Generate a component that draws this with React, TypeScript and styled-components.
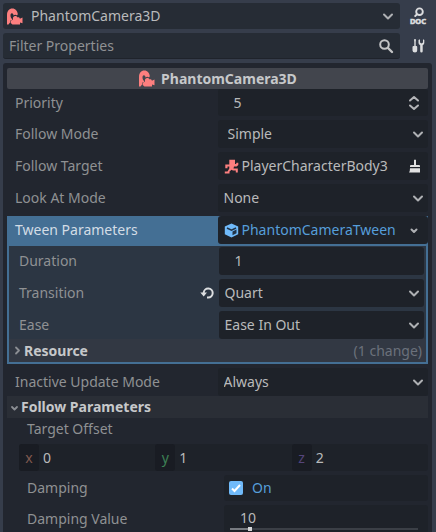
import React, { useState } from "react";
import styled, { createGlobalStyle, css } from "styled-components";

const color = {
  base: "#363d4b",
  panel: "#22262f",
  bar: "#262c35",
  field: "#1e2229",
  title: "#42454d",
  group: "#2a2e36",
  sub: "#2c3643",
  subGroup: "#323843",
  accent: "#446f94",
  link: "#569eda",
  check: "#70bafa",
  label: "#8f9193",
  text: "#b9babb",
  strong: "#c6c8ca",
  node: "#fc7f7f",
};

const Global = createGlobalStyle`
  * { box-sizing: border-box; }
  body { margin: 0; background: ${color.base}; overflow: hidden; }
  body, button, input, select {
    font-family: "Noto Sans", sans-serif;
    font-size: 14px;
    line-height: 20px;
  }
  button, input, select {
    margin: 0; padding: 0; border: 0; border-radius: 0;
    background: none; color: inherit; min-width: 0;
  }
  svg { display: block; flex: none; }
`;

const Dock = styled.main`
  display: flex;
  flex-direction: column;
  height: 100vh;
  padding: 3px 4px 0 3px;
  color: ${color.text};
`;

const Toolbar = styled.div`
  display: grid;
  grid-template-columns: 1fr 32px;
  row-gap: 4px;
  margin-bottom: 4px;
`;

const NodeButton = styled.button`
  display: flex;
  align-items: center;
  gap: 8px;
  height: 26px;
  padding: 0 4px 0 3px;
  border-radius: 3px;
  background: ${color.bar};
  text-align: left;
`;

const Grow = styled.span`
  flex: 1;
  min-width: 0;
  white-space: nowrap;
  overflow: hidden;
`;

const FilterBox = styled.label`
  display: flex;
  align-items: center;
  height: 26px;
  padding: 0 6px;
  border-radius: 3px;
  border-bottom: 1px solid #1f232b;
  background: ${color.bar};
`;

const FilterInput = styled.input`
  flex: 1;
  outline: none;
  &::placeholder { color: ${color.label}; opacity: 1; }
`;

const ToolButton = styled.button`
  display: flex;
  align-items: center;
  justify-content: center;
  padding-left: 4px;
  color: #dcdddf;
`;

const Panel = styled.section`
  display: flex;
  flex-direction: column;
  flex: 1;
  padding: 5px 4px 0;
  border-radius: 3px 3px 0 0;
  background: ${color.panel};
`;

const Title = styled.h1`
  display: flex;
  align-items: center;
  justify-content: center;
  gap: 6px;
  height: 21px;
  margin: 0;
  border-radius: 2px;
  background: ${color.title};
  color: ${color.strong};
  font-size: 14px;
  font-weight: 700;
`;

const Rows = styled.div`
  display: grid;
  gap: 4px;
`;

const Row = styled.div<{ $height?: number; $wide?: boolean; $selected?: boolean }>`
  display: grid;
  grid-template-columns: ${(p) => (p.$wide ? "1fr 204px" : "1fr 1fr")};
  height: ${(p) => p.$height ?? 28}px;
  ${(p) => p.$selected && css`background: ${color.accent}; --label: #d3dde6;`}
`;

const Label = styled.label<{ $indent?: number }>`
  display: flex;
  align-items: center;
  justify-content: space-between;
  padding-left: ${(p) => p.$indent ?? 8}px;
  padding-right: 4px;
  color: var(--label, ${color.label});
  white-space: nowrap;
`;

const Field = styled.div<{ $pad?: number }>`
  display: flex;
  align-items: center;
  min-width: 0;
  padding: 0 6px 0 ${(p) => p.$pad ?? 6}px;
  border-radius: 3px;
  background: ${color.field};
`;

const NumberInput = styled.input`
  flex: 1;
  width: 100%;
  outline: none;
`;

const SelectBox = styled.div`
  display: grid;
  align-items: center;
  border-radius: 3px;
  background: ${color.field};
  > * { grid-area: 1 / 1; }
  > svg { justify-self: end; margin-right: 2px; pointer-events: none; }
`;

const Select = styled.select<{ $pad?: number }>`
  appearance: none;
  width: 100%;
  height: 100%;
  padding-left: ${(p) => p.$pad ?? 6}px;
  outline: none;
`;

const ValueButton = styled.button<{ $link?: boolean }>`
  display: flex;
  align-items: center;
  flex: 1;
  gap: 3px;
  color: ${(p) => (p.$link ? color.link : "inherit")};
  text-align: left;
`;

const ClearButton = styled.button`
  flex: none;
`;

const SubInspector = styled.div`
  display: flex;
  flex-direction: column;
  margin-bottom: 4px;
  border: 2px solid ${color.accent};
  background: ${color.sub};
`;

const SubRows = styled(Rows)`
  padding: 1px 2px 0;
`;

const SubRow = styled(Row)`
  grid-template-columns: 1fr calc(50% - 1px);
`;

const GroupHeader = styled.button<{ $nested?: boolean }>`
  display: flex;
  align-items: center;
  width: 100%;
  height: ${(p) => (p.$nested ? 23 : 22)}px;
  padding: 0 4px 0 ${(p) => (p.$nested ? 1 : 0)}px;
  background: ${(p) => (p.$nested ? color.subGroup : color.group)};
  color: ${color.strong};
  font-weight: 700;
  text-align: left;
`;

const Changes = styled.span`
  color: #6b717b;
  font-weight: 400;
`;

const GroupLabel = styled.div`
  height: 26px;
  padding: 1px 0 0 20px;
  color: ${color.label};
`;

const Vector = styled.div`
  display: grid;
  grid-template-columns: repeat(3, 1fr);
  height: 27px;
  margin: 0 0 4px 12px;
  border-radius: 3px;
  background: ${color.field};
`;

const Axis = styled.label<{ $tone: string }>`
  display: flex;
  align-items: stretch;
  gap: 4px;
  min-width: 0;
  > span {
    display: grid;
    place-items: center;
    width: 20px;
    border-radius: 3px;
    background: #191c23;
    color: ${(p) => p.$tone};
  }
`;

const CheckField = styled.label`
  display: flex;
  align-items: center;
  gap: 9px;
  padding-left: 5px;
  border-radius: 3px;
  background: ${color.field};
  color: ${color.link};
`;

const Checkbox = styled.span`
  display: grid;
  width: 14px;
  height: 14px;
  > * { grid-area: 1 / 1; }
  > svg { pointer-events: none; }
  input {
    appearance: none;
    border-radius: 2px;
    background: #3a3f49;
  }
  input:checked { background: ${color.check}; }
  input:not(:checked) + svg { visibility: hidden; }
`;

const SliderField = styled.div`
  display: flex;
  flex-direction: column;
  padding: 3px 10px 0 6px;
  border-radius: 3px;
  background: ${color.field};
  input[type="text"] { height: 19px; padding-left: 10px; outline: none; }
`;

const Slider = styled.input`
  appearance: none;
  width: 100%;
  height: 4px;
  background: linear-gradient(
      to right,
      #777b81 var(--fill),
      #3b3f46 var(--fill)
    )
    center / 100% 2px no-repeat;
  &::-webkit-slider-thumb {
    appearance: none;
    width: 4px;
    height: 4px;
    background: #d4d5d7;
  }
`;

const PhantomIcon = () => (
  <svg width="17" height="17" viewBox="0 0 17 17">
    <path
      fill={color.node}
      d="M1 16.500V7C1 3 3.200 .5 6.300 .5C9.500 .5 11.500 3 11.800 6.300L11 7.500C10 6.500 8.500 6.600 7.600 7.600C7.300 6 6.800 5.300 5.900 5.300C4.800 5.300 4.500 6.400 4.500 7.500C4.500 9 5.100 10 6 11V12.500H4.200V14.200L2.500 16.500Z"
    />
    <path
      fill={color.node}
      d="M5.500 12.700L7 11.200C6.500 9.500 7.600 7.900 9.300 7.900C10.500 7.900 11.300 8.500 11.700 9.500C12.800 9 13.800 9.700 13.900 10.800L16.500 9.600V15.200L14 14.400V16.500H6.500L4.700 15V12.700Z"
    />
  </svg>
);

const Chevron = ({ small = false }: { small?: boolean }) => (
  <svg width="16" height="16" viewBox="0 0 16 16" fill="none" stroke="#aeb0b3" strokeWidth="2" strokeLinecap="round" strokeLinejoin="round">
    <path d={small ? "M5.500 7.500L8 10L10.500 7.500" : "M4 6.500L8 10.500L12 6.500"} />
  </svg>
);

const GroupArrow = ({ open }: { open: boolean }) => (
  <svg width="14" height="15" viewBox="0 0 14 15" fill="none" stroke="#8b8e93" strokeWidth="1.800" strokeLinecap="round" strokeLinejoin="round">
    <path d={open ? "M5 7L7.500 9.500L10 7" : "M6 4.500L9 7.500L6 10.500"} />
  </svg>
);

const UpDownIcon = () => (
  <svg width="16" height="16" viewBox="0 0 16 16" fill="none" stroke="#b4b5b8" strokeWidth="2" strokeLinecap="round" strokeLinejoin="round">
    <path d="M4 5.500L8 2L12 5.500M4 10.500L8 14L12 10.500" />
  </svg>
);

const SearchIcon = () => (
  <svg width="16" height="16" viewBox="0 0 16 16" fill="none" stroke="#c3c4c6" strokeWidth="2" strokeLinecap="round">
    <circle cx="6.500" cy="6.500" r="4.300" />
    <path d="M10 10L14 14" strokeWidth="2.400" />
  </svg>
);

const DocIcon = () => (
  <svg width="18" height="18" viewBox="0 0 18 18" fill="none" stroke="currentColor" strokeWidth="1.900" strokeLinecap="round">
    <circle cx="10.500" cy="4.700" r="3.300" />
    <path d="M7.900 7.300L6.200 9" />
    <text x="9" y="17" textAnchor="middle" fill="currentColor" strokeWidth=".6" fontFamily="Noto Sans, sans-serif" fontWeight="700" fontSize="7.500">DOC</text>
  </svg>
);

const ToolsIcon = () => (
  <svg width="16" height="16" viewBox="0 0 16 16" fill="currentColor">
    <path d="M4 1.500L5 1L6 1.500L5.700 4V8H6.500Q7.200 8 7.200 9V12.500Q7.200 14.500 5 14.500Q2.500 14.500 2.500 12.500V9Q2.500 8 3.500 8H4.300V4Z" />
    <path d="M8.500 2L10 1.300V4.600L11.500 5.500L13 4.600V1.300L14.300 2V5Q14.300 6.500 12.700 7.300V13.300Q12.700 14.500 11.500 14.500Q10.200 14.500 10.200 13.300V7.300Q8.500 6.500 8.500 5Z" />
  </svg>
);

const CharacterIcon = () => (
  <svg width="15" height="15" viewBox="0 0 15 15" fill={color.node}>
    <path d="M5.300 .8H11V5H12L12.600 3.800H14.300V6L12.600 7.500H10L9.500 9.500H13.800V13.500H11.800V11.500H9L7.500 10.700L5.500 12.500V14.500H.8V12.500H3.500L5.300 9.500V7.500H3.500V9.200H1.300V5.500H5.300Z" />
  </svg>
);

const BroomIcon = () => (
  <svg width="14" height="16" viewBox="0 0 14 16" fill="#e0e0e0">
    <path d="M6 2Q7 .8 8 2V7H11Q12 7 12 8V9H2V8Q2 7 3 7H6ZM2 10.300H12V14.500H1Q2 13.500 2 10.300Z" />
  </svg>
);

const CubeIcon = () => (
  <svg width="15" height="15" viewBox="0 0 15 15">
    <path fill={color.check} d="M7.500 .5L14.200 3.500V11.300L7.500 14.500L.8 11.300V3.500Z" />
    <path fill="none" stroke="#223448" strokeWidth="1.500" d="M3 5L7.500 7.200L12 5" />
    <path fill="#223448" d="M8.500 8.400L12.500 6.500V10.300L8.500 12.200Z" />
  </svg>
);

const RevertIcon = () => (
  <svg width="16" height="16" viewBox="0 0 16 16">
    <path fill="none" stroke="#dcdee0" strokeWidth="2" d="M4.700 8.500V7.700A4.500 4.500 0 1 1 9.200 12.500H8" />
    <path fill="#dcdee0" d="M1.300 7.500H8L4.700 11.500Z" />
  </svg>
);

const CheckMark = () => (
  <svg width="14" height="14" viewBox="0 0 14 14" fill="none" stroke="#fff" strokeWidth="2">
    <path d="M3 7.500L5.500 10L11 4" />
  </svg>
);

type DropProps = { id: string; label: string; value: string; pad?: number };

const Drop = ({ id, label, value, pad }: DropProps) => (
  <SelectBox>
    <Select id={id} aria-label={label} $pad={pad}>
      <option>{value}</option>
    </Select>
    <Chevron />
  </SelectBox>
);

const axes = [
  { name: "x", value: "0", tone: "#80594f" },
  { name: "y", value: "1", tone: "#3d8155" },
  { name: "z", value: "2", tone: "#55457b" },
];

export default function App() {
  const [damping, setDamping] = useState(10);
  return (
    <>
      <Global />
      <Dock>
        <Toolbar>
          <NodeButton>
            <PhantomIcon />
            <Grow>PhantomCamera3D</Grow>
            <Chevron />
          </NodeButton>
          <ToolButton aria-label="Open documentation"><DocIcon /></ToolButton>
          <FilterBox>
            <FilterInput type="text" aria-label="Filter Properties" placeholder="Filter Properties" />
            <SearchIcon />
          </FilterBox>
          <ToolButton aria-label="Object tools"><ToolsIcon /></ToolButton>
        </Toolbar>
        <Panel>
          <Title><PhantomIcon />PhantomCamera3D</Title>
          <Rows>
            <Row $height={27}>
              <Label htmlFor="priority">Priority</Label>
              <Field $pad={16}>
                <NumberInput id="priority" defaultValue="5" />
                <UpDownIcon />
              </Field>
            </Row>
            <Row>
              <Label htmlFor="follow-mode">Follow Mode</Label>
              <Drop id="follow-mode" label="Follow Mode" value="Simple" pad={10} />
            </Row>
            <Row>
              <Label htmlFor="follow-target">Follow Target</Label>
              <Field>
                <ValueButton id="follow-target"><CharacterIcon /><Grow>PlayerCharacterBody3</Grow></ValueButton>
                <ClearButton aria-label="Clear"><BroomIcon /></ClearButton>
              </Field>
            </Row>
            <Row>
              <Label htmlFor="look-at">Look At Mode</Label>
              <Drop id="look-at" label="Look At Mode" value="None" />
            </Row>
            <Row $selected>
              <Label htmlFor="tween">Tween Parameters</Label>
              <Field>
                <ValueButton id="tween" $link>
                  <CubeIcon /><Grow>PhantomCameraTween</Grow><Chevron small />
                </ValueButton>
              </Field>
            </Row>
          </Rows>
          <SubInspector>
            <SubRows>
              <SubRow>
                <Label htmlFor="duration">Duration</Label>
                <Field $pad={16}><NumberInput id="duration" defaultValue="1" /></Field>
              </SubRow>
              <SubRow>
                <Label htmlFor="transition">Transition<RevertIcon /></Label>
                <Drop id="transition" label="Transition" value="Quart" />
              </SubRow>
              <SubRow>
                <Label htmlFor="ease">Ease</Label>
                <Drop id="ease" label="Ease" value="Ease In Out" />
              </SubRow>
            </SubRows>
            <GroupHeader $nested>
              <GroupArrow open={false} /><Grow>Resource</Grow><Changes>(1 change)</Changes>
            </GroupHeader>
          </SubInspector>
          <Row>
            <Label htmlFor="inactive">Inactive Update Mode</Label>
            <Drop id="inactive" label="Inactive Update Mode" value="Always" />
          </Row>
          <GroupHeader><GroupArrow open />Follow Parameters</GroupHeader>
          <GroupLabel>Target Offset</GroupLabel>
          <Vector>
            {axes.map((a) => (
              <Axis key={a.name} $tone={a.tone}>
                <span>{a.name}</span>
                <NumberInput defaultValue={a.value} />
              </Axis>
            ))}
          </Vector>
          <Rows>
            <Row $height={26} $wide>
              <Label $indent={20} htmlFor="damping">Damping</Label>
              <CheckField>
                <Checkbox><input id="damping" type="checkbox" defaultChecked /><CheckMark /></Checkbox>
                On
              </CheckField>
            </Row>
            <Row $wide>
              <Label $indent={20} htmlFor="damping-value">Damping Value</Label>
              <SliderField>
                <input
                  type="text"
                  id="damping-value"
                  value={damping}
                  onChange={(e) => setDamping(Number(e.target.value) || 0)}
                />
                <Slider
                  type="range"
                  aria-label="Damping Value"
                  min={0}
                  max={100}
                  value={damping}
                  onChange={(e) => setDamping(Number(e.target.value))}
                  style={{ "--fill": `${damping}%` } as React.CSSProperties}
                />
              </SliderField>
            </Row>
          </Rows>
        </Panel>
      </Dock>
    </>
  );
}
